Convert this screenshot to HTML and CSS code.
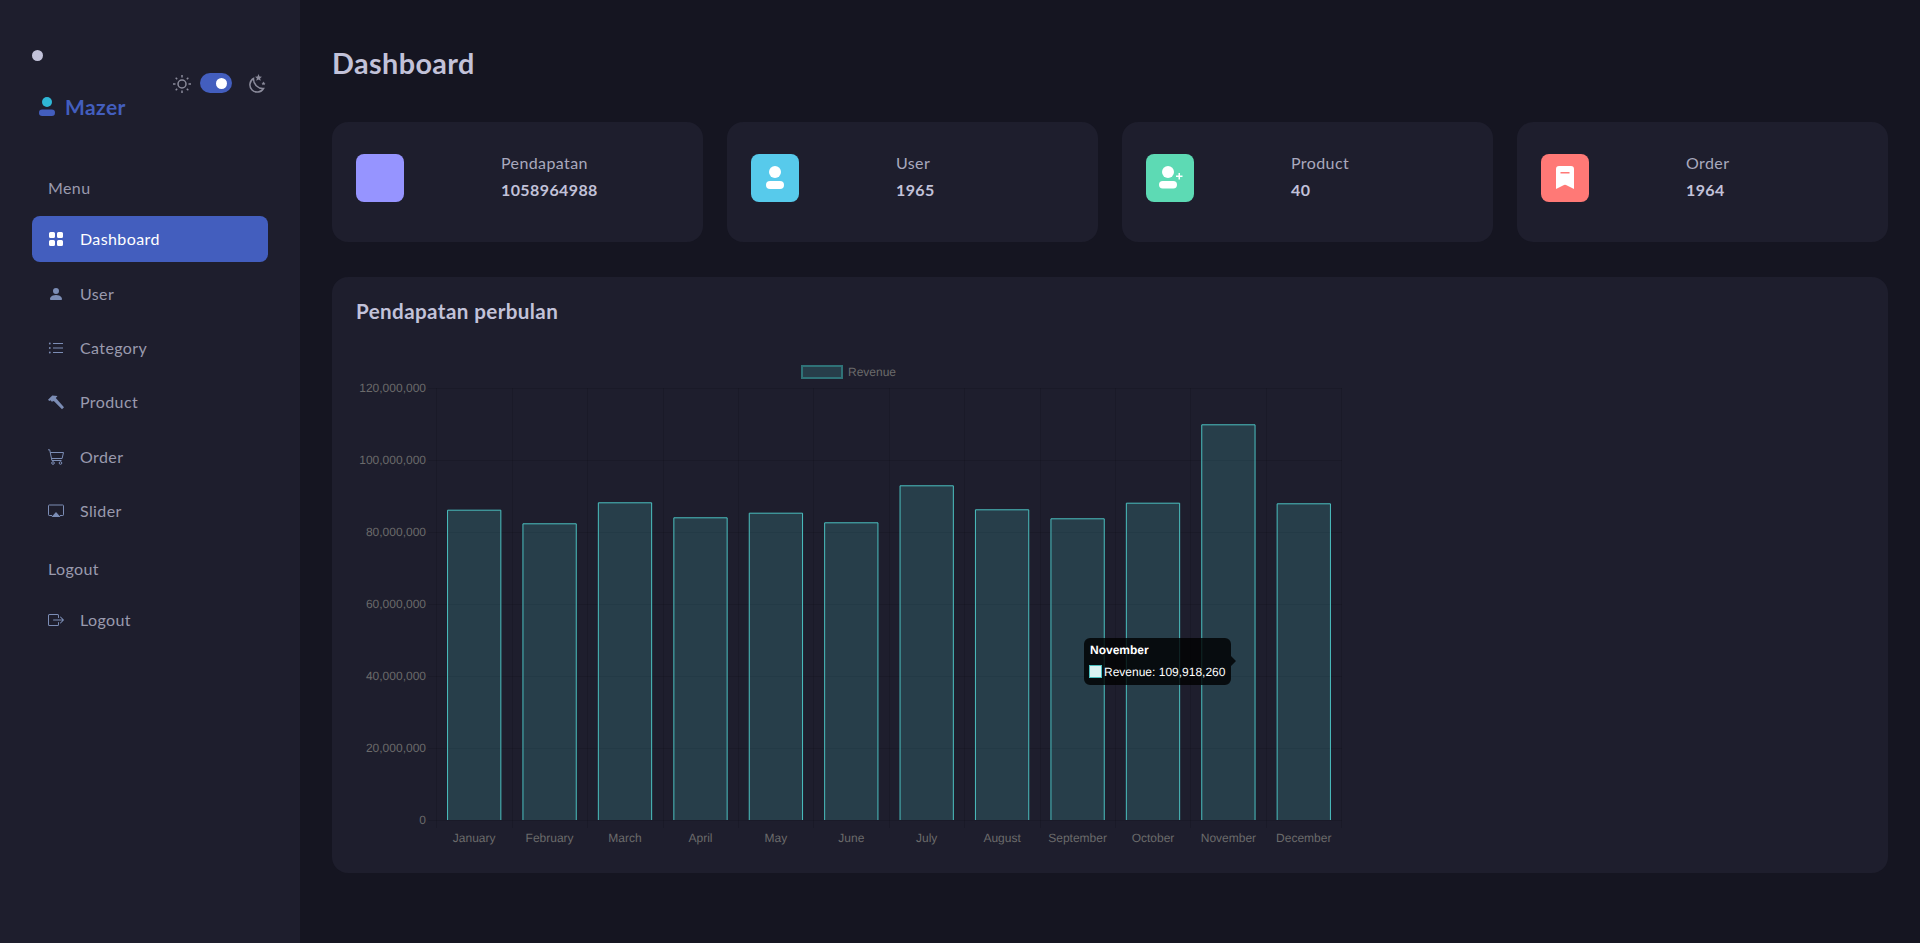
FILE: index.html
```html
<!DOCTYPE html>
<html lang="en">
<head>
    <meta charset="UTF-8">
    <title>Dashboard - Mazer</title>
    <link rel="stylesheet" href="styles.css">
</head>
<body>
<div class="app">
    <aside class="sidebar">
        <div class="sidebar-header">
            <div>
                <div class="dot"></div>
                <div class="logo">
                    <svg class="logo-icon" viewBox="0 0 16 24"><circle cx="8" cy="7" r="5" fill="#2fb7d6"/><rect x="0" y="14.500" width="16" height="6.500" rx="3.200" fill="#435ebe"/></svg>
                    <span>Mazer</span>
                </div>
            </div>
            <div class="theme-toggle">
                <svg class="theme-icon" viewBox="0 0 20 20"><circle cx="10" cy="11" r="4"/><path d="M10 2v2.500M10 17.500V20M1 11h2.500M16.500 11H19M3.700 4.700l1.500 1.500M14.800 15.800l1.500 1.500M3.700 17.300l1.500-1.500M14.800 6.200l1.500-1.500"/></svg>
                <div class="switch"><span class="knob"></span></div>
                <svg class="theme-icon moon" viewBox="0 0 20 20"><path d="M6.500 5.500A7.300 7.300 0 1 0 16.500 15.500 9.500 9.500 0 0 1 6.500 5.500z"/><path class="star" d="M11.500 1l1 2.500 2.500.2-1.900 1.600.6 2.500-2.200-1.300-2.200 1.300.6-2.500L8 3.700l2.500-.2zM16.500 8.500l.6 1.300 1.400.1-1 .9.300 1.400-1.300-.7-1.300.7.300-1.400-1-.9 1.400-.1z"/></svg>
            </div>
        </div>

        <div class="menu-title first">Menu</div>
        <ul class="menu">
            <li class="menu-item active">
                <svg class="menu-icon" viewBox="0 0 16 16"><path class="solid" d="M1 2.500A1.500 1.500 0 0 1 2.500 1h3A1.500 1.500 0 0 1 7 2.500v3A1.500 1.500 0 0 1 5.500 7h-3A1.500 1.500 0 0 1 1 5.500zm8 0A1.500 1.500 0 0 1 10.500 1h3A1.500 1.500 0 0 1 15 2.500v3A1.500 1.500 0 0 1 13.500 7h-3A1.500 1.500 0 0 1 9 5.500zm-8 8A1.500 1.500 0 0 1 2.500 9h3A1.500 1.500 0 0 1 7 10.500v3A1.500 1.500 0 0 1 5.500 15h-3A1.500 1.500 0 0 1 1 13.500zm8 0A1.500 1.500 0 0 1 10.500 9h3a1.500 1.500 0 0 1 1.500 1.500v3a1.500 1.500 0 0 1-1.500 1.500h-3A1.500 1.500 0 0 1 9 13.500z"/></svg>
                <span>Dashboard</span>
            </li>
            <li class="menu-item">
                <svg class="menu-icon" viewBox="0 0 16 16"><path class="solid" d="M3 14s-1 0-1-1 1-4 6-4 6 3 6 4-1 1-1 1H3zm5-6a3 3 0 1 0 0-6 3 3 0 0 0 0 6z"/></svg>
                <span>User</span>
            </li>
            <li class="menu-item">
                <svg class="menu-icon" viewBox="0 0 16 16"><path class="line" d="M5 3.500h10M5 8h10M5 12.500h10"/><circle class="solid" cx="1.800" cy="3.500" r="0.900"/><circle class="solid" cx="1.800" cy="8" r="0.900"/><circle class="solid" cx="1.800" cy="12.500" r="0.900"/></svg>
                <span>Category</span>
            </li>
            <li class="menu-item">
                <svg class="menu-icon" viewBox="0 0 16 16"><path class="solid" d="M0 5.700 4.300 1.500 9.500 2 7.800 4 16 13.200 14 15.300 5.800 7 3.800 7.700 2.500 6.200 1.300 7z"/></svg>
                <span>Product</span>
            </li>
            <li class="menu-item">
                <svg class="menu-icon" viewBox="0 0 16 16"><path class="line" d="M0 .8h1.700l2.200 10.700h9.600M2.300 3.500h13.200l-1.400 6H3.500"/><circle class="line" cx="5" cy="14" r="1.300"/><circle class="line" cx="12.500" cy="14" r="1.300"/></svg>
                <span>Order</span>
            </li>
            <li class="menu-item">
                <svg class="menu-icon" viewBox="0 0 16 16"><path class="line" d="M4 12.500H1.200a.7.7 0 0 1-.7-.7V2.700a.7.7 0 0 1 .7-.7h13.600a.7.7 0 0 1 .7.7v9.100a.7.7 0 0 1-.7.7H12"/><path class="solid" d="M8 9l4.500 5h-9z"/></svg>
                <span>Slider</span>
            </li>
        </ul>

        <div class="menu-title">Logout</div>
        <ul class="menu">
            <li class="menu-item">
                <svg class="menu-icon" viewBox="0 0 16 16"><path class="solid" d="M10 12.500a.5.5 0 0 1-.5.5h-8a.5.5 0 0 1-.5-.5v-9a.5.5 0 0 1 .5-.5h8a.5.5 0 0 1 .5.5v2a.5.5 0 0 0 1 0v-2A1.500 1.500 0 0 0 9.500 2h-8A1.500 1.500 0 0 0 0 3.500v9A1.500 1.500 0 0 0 1.500 14h8a1.500 1.500 0 0 0 1.500-1.500v-2a.5.5 0 0 0-1 0z"/><path class="solid" d="M15.854 8.354a.5.5 0 0 0 0-.708l-3-3a.5.5 0 0 0-.708.708L14.293 7.500H5.500a.5.5 0 0 0 0 1h8.793l-2.147 2.146a.5.5 0 0 0 .708.708z"/></svg>
                <span>Logout</span>
            </li>
        </ul>
    </aside>

    <main class="content">
        <h3 class="page-title">Dashboard</h3>

        <section class="stats">
            <div class="card stat">
                <div class="stat-col"><div class="stat-icon purple"></div></div>
                <div>
                    <div class="stat-label">Pendapatan</div>
                    <div class="stat-value">1058964988</div>
                </div>
            </div>
            <div class="card stat">
                <div class="stat-col">
                    <div class="stat-icon blue">
                        <svg viewBox="0 0 48 48"><circle cx="24" cy="18" r="6"/><rect x="15" y="27" width="18" height="8" rx="4"/></svg>
                    </div>
                </div>
                <div>
                    <div class="stat-label">User</div>
                    <div class="stat-value">1965</div>
                </div>
            </div>
            <div class="card stat">
                <div class="stat-col">
                    <div class="stat-icon green">
                        <svg viewBox="0 0 48 48"><circle cx="22" cy="18" r="6"/><rect x="13" y="27" width="18" height="7.500" rx="3.700"/><path d="M32.500 19h1.500v2.500h2.500V23H34v2.500h-1.500V23H30v-1.500h2.500z"/></svg>
                    </div>
                </div>
                <div>
                    <div class="stat-label">Product</div>
                    <div class="stat-value">40</div>
                </div>
            </div>
            <div class="card stat">
                <div class="stat-col">
                    <div class="stat-icon red">
                        <svg viewBox="0 0 48 48"><path d="M15 15a3 3 0 0 1 3-3h12a3 3 0 0 1 3 3v20l-8-4a2 2 0 0 0-2 0l-8 4z"/><rect class="cut" x="19.500" y="18" width="9" height="1.500"/></svg>
                    </div>
                </div>
                <div>
                    <div class="stat-label">Order</div>
                    <div class="stat-value">1964</div>
                </div>
            </div>
        </section>

        <section class="card chart-card">
            <h4 class="chart-title">Pendapatan perbulan</h4>
            <svg class="chart" viewBox="356 350 1020 499">
                <!-- legend -->
                <rect class="legend-box" x="802" y="366" width="40" height="12"/>
                <text class="tick" x="848" y="376">Revenue</text>

                <!-- grid -->
                <path class="grid" d="M428 388.500H1342M428 460.500H1342M428 532.500H1342M428 604.500H1342M428 676.500H1342M428 748.500H1342M428 820.500H1342"/>
                <path class="grid" d="M436.500 388V828M512.500 388V828M587.500 388V828M663.500 388V828M738.500 388V828M813.500 388V828M889.500 388V828M964.500 388V828M1040.500 388V828M1115.500 388V828M1190.500 388V828M1266.500 388V828M1341.500 388V828"/>

                <!-- y axis -->
                <g class="y-labels">
                    <text class="tick" x="426" y="392">120,000,000</text>
                    <text class="tick" x="426" y="464">100,000,000</text>
                    <text class="tick" x="426" y="536">80,000,000</text>
                    <text class="tick" x="426" y="608">60,000,000</text>
                    <text class="tick" x="426" y="680">40,000,000</text>
                    <text class="tick" x="426" y="752">20,000,000</text>
                    <text class="tick" x="426" y="824">0</text>
                </g>

                <!-- bars -->
                <path class="bar" d="M447.550 820V510.200H500.850V820"/>
                <path class="bar" d="M522.950 820V523.800H576.250V820"/>
                <path class="bar" d="M598.350 820V502.800H651.650V820"/>
                <path class="bar" d="M673.850 820V517.800H727.150V820"/>
                <path class="bar" d="M749.250 820V513.200H802.550V820"/>
                <path class="bar" d="M824.650 820V522.800H877.950V820"/>
                <path class="bar" d="M900.050 820V485.800H953.350V820"/>
                <path class="bar" d="M975.450 820V509.800H1028.750V820"/>
                <path class="bar" d="M1050.950 820V518.800H1104.250V820"/>
                <path class="bar" d="M1126.350 820V503.200H1179.650V820"/>
                <path class="bar" d="M1201.750 820V424.800H1255.050V820"/>
                <path class="bar" d="M1277.150 820V503.800H1330.450V820"/>

                <!-- x axis -->
                <g class="x-labels">
                    <text class="tick" x="474.200" y="842">January</text>
                    <text class="tick" x="549.600" y="842">February</text>
                    <text class="tick" x="625" y="842">March</text>
                    <text class="tick" x="700.500" y="842">April</text>
                    <text class="tick" x="775.900" y="842">May</text>
                    <text class="tick" x="851.300" y="842">June</text>
                    <text class="tick" x="926.700" y="842">July</text>
                    <text class="tick" x="1002.100" y="842">August</text>
                    <text class="tick" x="1077.600" y="842">September</text>
                    <text class="tick" x="1153" y="842">October</text>
                    <text class="tick" x="1228.400" y="842">November</text>
                    <text class="tick" x="1303.800" y="842">December</text>
                </g>

                <!-- tooltip -->
                <path class="tooltip" d="M1090 638H1225a6 6 0 0 1 6 6V656L1236 661 1231 666V679a6 6 0 0 1-6 6H1090a6 6 0 0 1-6-6V644a6 6 0 0 1 6-6z"/>
                <text class="tooltip-title" x="1090" y="654">November</text>
                <rect class="tooltip-swatch" x="1089.500" y="665.500" width="12" height="12"/>
                <text class="tooltip-text" x="1104" y="675.500">Revenue: 109,918,260</text>
            </svg>
        </section>
    </main>
</div>
</body>
</html>
```

FILE: styles.css
```css
*{
    margin: 0;
    padding: 0;
    box-sizing: border-box;
}
html,body{
    width: 100%;
    height: 100%;
}
body{
    background: #151521;
    color: #c2c2d9;
    font-family: Lato, "Noto Sans", sans-serif;
    font-size: 16px;
    letter-spacing: 0.4px;
    line-height: 24px;
    overflow: hidden;
}
ul{
    list-style: none;
}
.app{
    display: flex;
    min-height: 100%;
}

/* sidebar */
.sidebar{
    width: 300px;
    flex-shrink: 0;
    background: #1e1e2d;
    padding: 50px 32px 0;
}
.sidebar-header{
    display: flex;
    justify-content: space-between;
    align-items: flex-start;
}
.dot{
    width: 11px;
    height: 11px;
    border-radius: 50%;
    background: #c2c2d9;
}
.logo{
    display: flex;
    align-items: center;
    gap: 10px;
    margin: 29px 0 0 7px;
    height: 33px;
    color: #435ebe;
    font-size: 21px;
    font-weight: 700;
}
.logo-icon{
    width: 16px;
    height: 24px;
}
.theme-toggle{
    display: flex;
    align-items: center;
    gap: 8px;
    margin-top: 23px;
}
.theme-icon{
    width: 20px;
    height: 20px;
    fill: none;
    stroke: #8b8b9b;
    stroke-width: 1.500;
}
.theme-icon .star{
    fill: #8b8b9b;
    stroke: none;
}
.moon{
    margin-left: 7px;
    margin-right: 1px;
}
.switch{
    display: flex;
    justify-content: flex-end;
    align-items: center;
    width: 32px;
    height: 20px;
    padding-right: 5px;
    border-radius: 10px;
    background: #435ebe;
}
.knob{
    width: 11px;
    height: 11px;
    border-radius: 50%;
    background: #fff;
}
.menu-title{
    margin: 23px 0 16px;
    padding: 0 16px;
    color: #9a9aae;
}
.menu-title.first{
    margin-top: 53px;
}
.menu{
    display: flex;
    flex-direction: column;
    gap: 8px;
}
.menu-item{
    display: flex;
    align-items: center;
    gap: 16px;
    padding: 11.200px 16px;
    border-radius: 8px;
    color: #9a9aae;
}
.menu-item.active{
    background: #435ebe;
    color: #fff;
}
.menu-icon{
    width: 16px;
    height: 16px;
    flex-shrink: 0;
}
.menu-icon .solid{
    fill: #7c8db5;
}
.menu-icon .line{
    fill: none;
    stroke: #7c8db5;
}
.active .menu-icon .solid{
    fill: #fff;
}

/* content */
.content{
    flex: 1;
    padding: 0 32px;
}
.page-title{
    height: 122px;
    padding-top: 43px;
    font-size: 28.800px;
    line-height: 40px;
    font-weight: 700;
}
.card{
    background: #1e1e2d;
    border-radius: 16px;
}
.stats{
    display: grid;
    grid-template-columns: repeat(4, 1fr);
    gap: 24px;
}
.stat{
    display: flex;
    height: 120px;
    padding: 29px 24px;
}
.stat-col{
    width: 145px;
    padding-top: 3px;
}
.stat-icon{
    width: 48px;
    height: 48px;
    border-radius: 8px;
}
.stat-icon svg{
    display: block;
    fill: #fff;
}
.stat-icon .cut{
    fill: #ff7976;
}
.purple{
    background: #9694ff;
}
.blue{
    background: #57caeb;
}
.green{
    background: #5ddab4;
}
.red{
    background: #ff7976;
}
.stat-label{
    color: #a9a9bd;
}
.stat-value{
    margin-top: 3px;
    font-weight: 700;
}

/* chart */
.chart-card{
    height: 596px;
    margin-top: 35px;
    padding: 20px 24px 0;
}
.chart-title{
    height: 53px;
    font-size: 20.600px;
    line-height: 28px;
    font-weight: 700;
}
.chart{
    display: block;
    width: 1020px;
    height: 499px;
    text-rendering: geometricPrecision;
}
.tick{
    fill: #6b6b6b;
    font-family: "Liberation Sans", Arial, sans-serif;
    font-size: 12px;
    letter-spacing: 0;
}
.y-labels{
    text-anchor: end;
}
.x-labels{
    text-anchor: middle;
}
.grid{
    fill: none;
    stroke: rgba(0, 0, 0, 0.1);
    stroke-width: 1;
}
.bar{
    fill: rgba(75, 192, 192, 0.2);
    stroke: #4bc0c0;
    stroke-width: 1;
}
.legend-box{
    fill: #273e4a;
    stroke: #2f7277;
    stroke-width: 2;
}
.tooltip{
    fill: rgba(0, 0, 0, 0.8);
}
.tooltip-title,.tooltip-text{
    fill: #fff;
    font-family: "Liberation Sans", Arial, sans-serif;
    font-size: 12px;
    letter-spacing: 0;
}
.tooltip-title{
    font-weight: 700;
}
.tooltip-swatch{
    fill: #dbf2f2;
    stroke: #4bc0c0;
    stroke-width: 1;
}
```
